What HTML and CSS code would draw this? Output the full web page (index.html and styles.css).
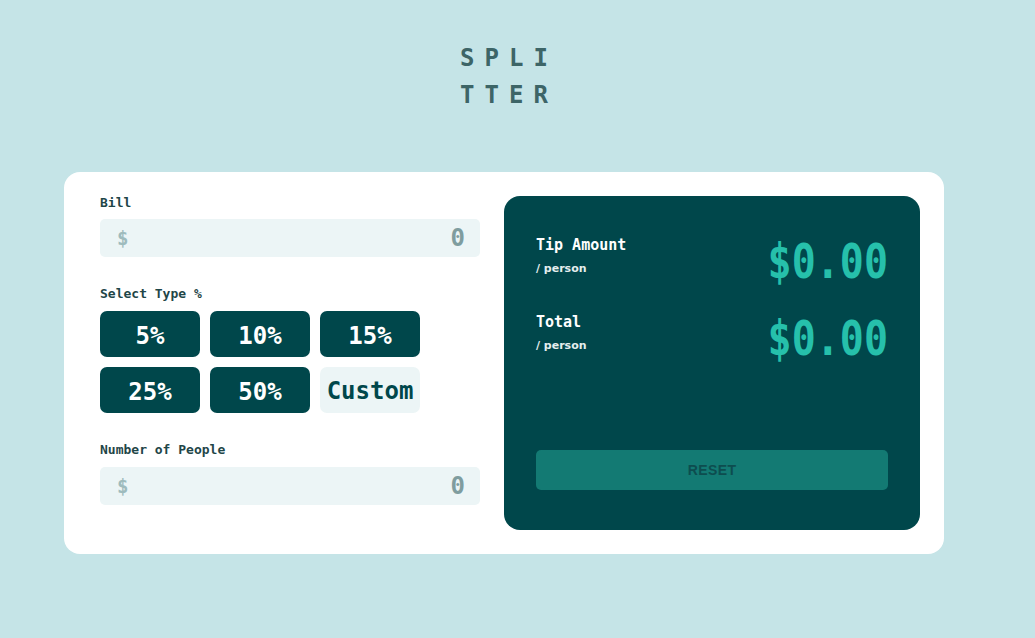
FILE: index.html
```html
<!DOCTYPE html>
<html lang="en">
<head>
<meta charset="utf-8">
<title>Splitter</title>
<link rel="stylesheet" href="styles.css">
</head>
<body>
<div class="page">
  <h1 class="logo"><span>SPLI</span><span>TTER</span></h1>
  <main class="card">
    <section class="inputs">
      <div class="field">
        <label class="label">Bill</label>
        <div class="input"><span class="prefix">$</span><span class="value">0</span></div>
      </div>
      <div class="field">
        <label class="label">Select Type %</label>
        <div class="tips">
          <button class="tip">5%</button>
          <button class="tip">10%</button>
          <button class="tip">15%</button>
          <button class="tip">25%</button>
          <button class="tip">50%</button>
          <button class="tip custom">Custom</button>
        </div>
      </div>
      <div class="field">
        <label class="label">Number of People</label>
        <div class="input"><span class="prefix">$</span><span class="value">0</span></div>
      </div>
    </section>
    <section class="results">
      <div class="row">
        <div class="row-label">
          <div class="title">Tip Amount</div>
          <div class="sub">/ person</div>
        </div>
        <div class="amount">$0.00</div>
      </div>
      <div class="row">
        <div class="row-label">
          <div class="title">Total</div>
          <div class="sub">/ person</div>
        </div>
        <div class="amount">$0.00</div>
      </div>
      <button class="reset">RESET</button>
    </section>
  </main>
</div>
</body>
</html>
```
FILE: styles.css
```css
* { box-sizing: border-box; }
html, body { margin: 0; padding: 0; }
body {
  background: #c5e4e7;
  font-family: "DejaVu Sans Mono", "Liberation Mono", monospace;
  font-weight: bold;
  width: 1035px;
  height: 638px;
  overflow: hidden;
}
.page {
  display: flex;
  flex-direction: column;
  align-items: center;
  padding-right: 27px;
}
.logo {
  margin: 40px 0 58px 0;
  font-size: 24px;
  line-height: 37px;
  letter-spacing: 10px;
  color: #3d6567;
  text-align: center;
  display: flex;
  flex-direction: column;
  padding-left: 10px;
}
.card {
  width: 880px;
  height: 382px;
  background: #fff;
  border-radius: 16px;
  display: flex;
  gap: 24px;
  padding: 24px 24px 24px 36px;
}
.inputs {
  width: 380px;
  display: flex;
  flex-direction: column;
  gap: 30px;
}
.field { display: flex; flex-direction: column; }
.label {
  font-size: 13px;
  line-height: 14px;
  color: #1f4648;
  margin-bottom: 9px;
}
.field + .field .label { margin-bottom: 10px; }
.input {
  height: 38px;
  background: #ecf5f6;
  border-radius: 5px;
  display: flex;
  align-items: center;
  justify-content: space-between;
  padding: 0 15px 0 17px;
}
.prefix {
  font-size: 19px;
  color: #9ebbbd;
}
.value {
  font-size: 24px;
  color: #7f9d9f;
}
.tips {
  display: grid;
  grid-template-columns: repeat(3, 100px);
  gap: 10px;
}
.tip {
  height: 46px;
  border: none;
  border-radius: 7px;
  background: #00474b;
  color: #fff;
  font-family: inherit;
  font-weight: bold;
  font-size: 24px;
  padding: 3px 0 0 0;
}
.tip.custom {
  background: #ecf5f6;
  color: #00474b;
  padding-top: 2px;
}
.results {
  width: 416px;
  background: #00474b;
  border-radius: 16px;
  padding: 39px 32px 40px 32px;
  display: flex;
  flex-direction: column;
  gap: 25px;
}
.row {
  display: flex;
  justify-content: space-between;
  align-items: flex-start;
}
.title {
  color: #fff;
  font-size: 15px;
  line-height: 20px;
}
.sub {
  color: #e4eeee;
  font-size: 11px;
  line-height: 14px;
  margin-top: 7px;
  font-family: "DejaVu Sans", sans-serif;
}
.amount {
  color: #26c0ab;
  font-size: 40px;
  line-height: 52px;
  transform: scaleY(1.18);
}
.reset {
  margin-top: auto;
  height: 40px;
  border: none;
  border-radius: 5px;
  background: #137a73;
  color: #0d4d4f;
  font-family: "Liberation Sans", Arial, sans-serif;
  font-weight: bold;
  font-size: 14px;
  letter-spacing: 0.4px;
}
```
